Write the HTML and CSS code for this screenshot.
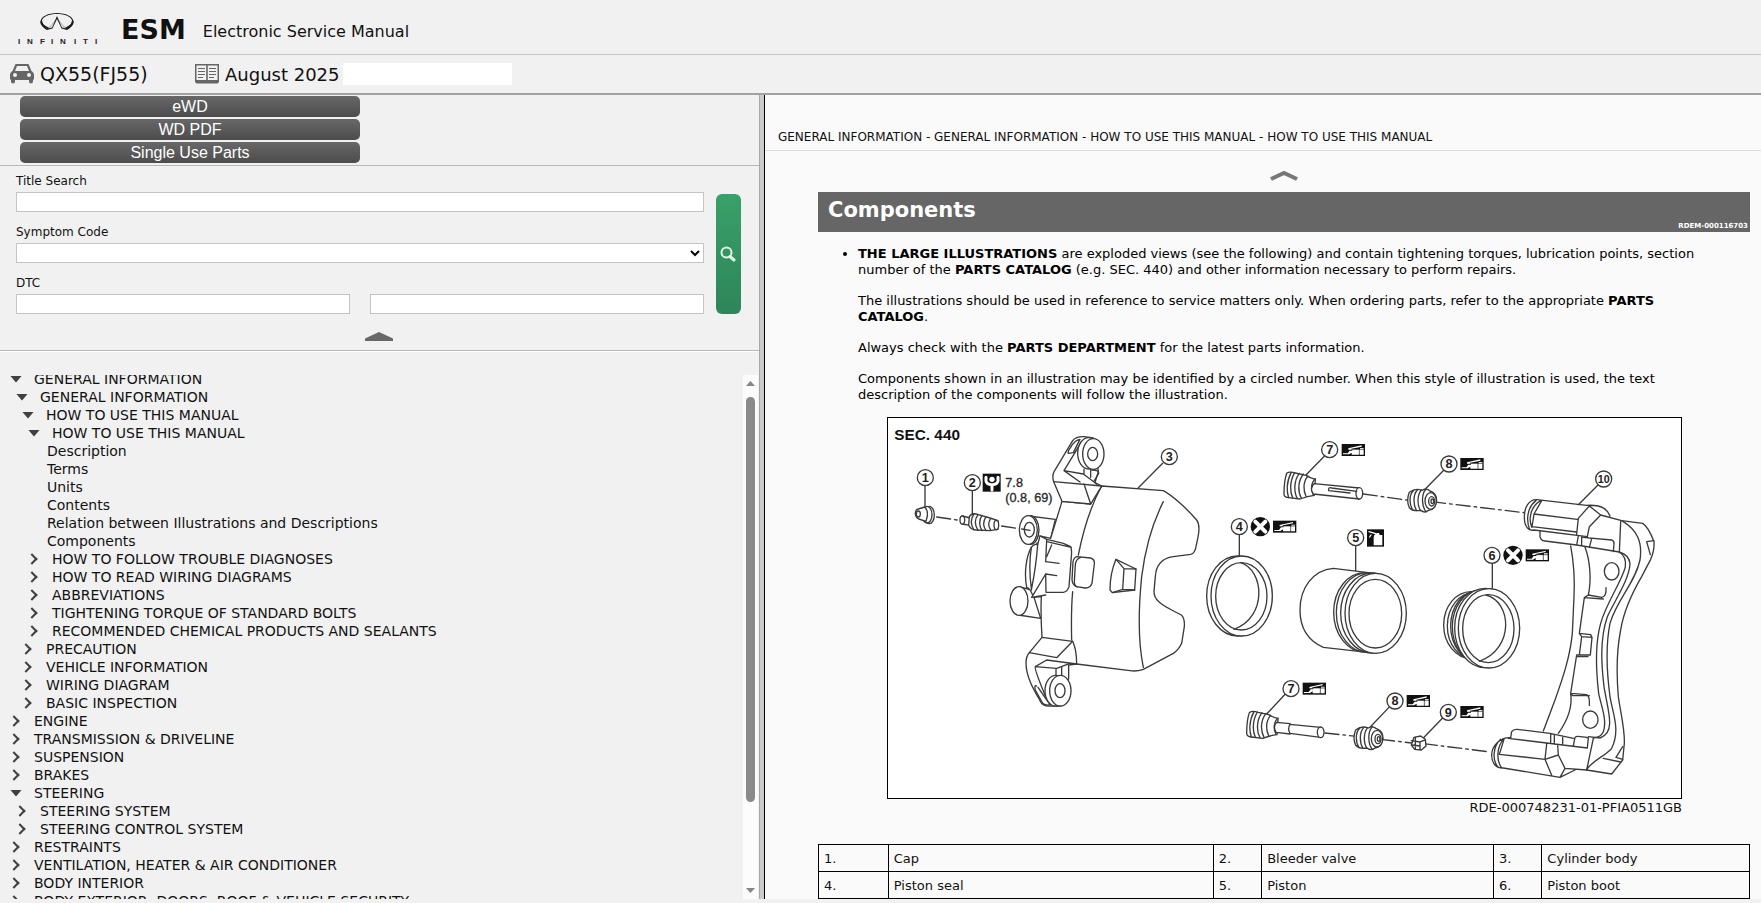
FILE: index.html
```
<!DOCTYPE html>
<html lang="en">
<head>
<meta charset="utf-8">
<title>ESM - Electronic Service Manual</title>
<link rel="stylesheet" href="styles.css">
</head>
<body>
<header class="brand">
  <svg class="logo" viewBox="0 0 80 32" role="img" aria-label="Infiniti">
    <path fill="#1b1b1b" fill-rule="evenodd" d="M29 17C24 14 22 11 22.500 8.500C23 3.500 30 0 39 0S55 3.500 55.500 8.500C56 11 54 14 49 17L43.500 15.500L39 6L34.500 15.500ZM29 15.500L31 14.300C35 11 37.500 7 39 3C40.500 7 43 11 47 14.300L49 15.500C52 12.500 54.500 10 54 7.500C53 3.500 47 1 39 1S25 3.500 24 7.500C23.500 10 26 12.500 29 15.500ZM29.500 15.500L34 14.500L38 6C36 10 33 13.500 29.500 15.500ZM48.500 15.500L44 14.500L40 6C42 10 45 13.500 48.500 15.500Z"/>
    <path fill="none" stroke="#1b1b1b" stroke-width="1.800" d="M30.500 15.500C25 13 23 10 23.500 8M47.500 15.500C53 13 55 10 54.500 8"/>
    <g class="logo-word"><text x="0" y="31">I</text><text x="9" y="31">N</text><text x="22" y="31">F</text><text x="33" y="31">I</text><text x="42" y="31">N</text><text x="56" y="31">I</text><text x="65" y="31">T</text><text x="77" y="31">I</text></g>
  </svg>
  <h1 class="brand-name">ESM</h1>
  <span class="brand-sub">Electronic Service Manual</span>
</header>
<div class="vehicle">
  <svg class="ico" viewBox="0 0 24 20" aria-hidden="true"><path fill="#666" fill-rule="evenodd" d="M5.500 0h13l3 7c1.500 1 2.500 2 2.500 4v4l-1 1v1.500a2 2 0 0 1-4 0V16H5v1.500a2 2 0 0 1-4 0V16l-1-1v-4c0-2 1-3 2.500-4zM7 2L5 7h14l-2-5z"/><circle cx="5" cy="11" r="2" fill="#f1f1f1"/><circle cx="19" cy="11" r="2" fill="#f1f1f1"/></svg>
  <span class="model">QX55(FJ55)</span>
  <svg class="ico" viewBox="0 0 24 20" aria-hidden="true"><path fill="#666" d="M0 0h24v18l-1.500 1.500h-21L0 18z"/><path fill="#f1f1f1" d="M1.500 1.500h9.700V16H1.500zM12.800 1.500h9.700V16h-9.700z"/><path stroke="#666" d="M3 4.500h7M3 7.500h7M3 10.500h7M3 13.500h5M14 4.500h7M14 7.500h7M14 10.500h7M14 13.500h5"/></svg>
  <span class="edition">August 2025</span>
  <span class="blank"></span>
</div>
<main class="panes">
  <aside class="side">
    <div class="actions">
      <button class="act" type="button">eWD</button>
      <button class="act" type="button">WD PDF</button>
      <button class="act" type="button">Single Use Parts</button>
    </div>
    <form class="search">
      <div class="fields">
        <label for="title">Title Search</label>
        <input id="title" type="text">
        <label for="symptom">Symptom Code</label>
        <select id="symptom"><option></option></select>
        <label for="dtc">DTC</label>
        <div class="pair"><input id="dtc" type="text"><input type="text" aria-label="DTC second code"></div>
      </div>
      <button class="go" type="button" aria-label="Search"><svg viewBox="0 0 16 16" width="16" height="16"><circle cx="6.500" cy="6.500" r="5" fill="none" stroke="#e4f4ea" stroke-width="2"/><path d="M10 10.500l4 3.500" stroke="#e4f4ea" stroke-width="3" stroke-linecap="round"/></svg></button>
      <button class="fold" type="button" aria-label="Collapse search"><svg viewBox="0 0 28 9" width="28" height="9"><path fill="#686868" d="M0 6.500L14 0l14 6.500V9H0z"/></svg></button>
    </form>
    <div class="nav">
      <ul class="tree">
        <li class="open l0">GENERAL INFORMATION</li>
        <li class="open l1">GENERAL INFORMATION</li>
        <li class="open l2">HOW TO USE THIS MANUAL</li>
        <li class="open l3">HOW TO USE THIS MANUAL</li>
        <li class="leaf">Description</li>
        <li class="leaf">Terms</li>
        <li class="leaf">Units</li>
        <li class="leaf">Contents</li>
        <li class="leaf">Relation between Illustrations and Descriptions</li>
        <li class="leaf">Components</li>
        <li class="shut l3">HOW TO FOLLOW TROUBLE DIAGNOSES</li>
        <li class="shut l3">HOW TO READ WIRING DIAGRAMS</li>
        <li class="shut l3">ABBREVIATIONS</li>
        <li class="shut l3">TIGHTENING TORQUE OF STANDARD BOLTS</li>
        <li class="shut l3">RECOMMENDED CHEMICAL PRODUCTS AND SEALANTS</li>
        <li class="shut l2">PRECAUTION</li>
        <li class="shut l2">VEHICLE INFORMATION</li>
        <li class="shut l2">WIRING DIAGRAM</li>
        <li class="shut l2">BASIC INSPECTION</li>
        <li class="shut l0">ENGINE</li>
        <li class="shut l0">TRANSMISSION &amp; DRIVELINE</li>
        <li class="shut l0">SUSPENSION</li>
        <li class="shut l0">BRAKES</li>
        <li class="open l0">STEERING</li>
        <li class="shut l1">STEERING SYSTEM</li>
        <li class="shut l1">STEERING CONTROL SYSTEM</li>
        <li class="shut l0">RESTRAINTS</li>
        <li class="shut l0">VENTILATION, HEATER &amp; AIR CONDITIONER</li>
        <li class="shut l0">BODY INTERIOR</li>
        <li class="shut l0">BODY EXTERIOR, DOORS, ROOF &amp; VEHICLE SECURITY</li>
      </ul>
      <div class="bar" aria-hidden="true"><span class="up"></span><div class="rail"><span class="thumb"></span></div><span class="down"></span></div>
    </div>
  </aside>
  <div class="split"></div>
  <article class="doc">
    <nav class="crumbs">GENERAL INFORMATION - GENERAL INFORMATION - HOW TO USE THIS MANUAL - HOW TO USE THIS MANUAL</nav>
    <button class="lift" type="button" aria-label="Previous section"><svg viewBox="0 0 28 10" width="28" height="10"><path fill="none" stroke="#777" stroke-width="4" d="M1 8L14 2l13 6"/></svg></button>
    <div class="page">
      <div class="title"><h2>Components</h2><span class="ref">RDEM-000116703</span></div>
      <ul class="body">
        <li>
          <p><b>THE LARGE ILLUSTRATIONS</b> are exploded views (see the following) and contain tightening torques, lubrication points, section number of the <b>PARTS CATALOG</b> (e.g. SEC. 440) and other information necessary to perform repairs.</p>
          <p>The illustrations should be used in reference to service matters only. When ordering parts, refer to the appropriate <b>PARTS CATALOG</b>.</p>
          <p>Always check with the <b>PARTS DEPARTMENT</b> for the latest parts information.</p>
          <p>Components shown in an illustration may be identified by a circled number. When this style of illustration is used, the text description of the components will follow the illustration.</p>
        </li>
      </ul>
      <figure class="fig">
<svg class="drawing" viewBox="888 418 793 380" role="img" aria-label="Exploded view of brake caliper">
  <defs>
    <g id="grease"><path fill="#111" stroke="none" d="M0 0h70v36H0z"/><path fill="#fff" stroke="none" d="M20 13L60 4v4L30 14v2h25v-4h11v20H30v-6l-8 5H4v-3h14l6-8h8v-3H20z"/><path fill="none" stroke="#111" stroke-width="2" d="M30 16h36M53 16v17"/></g>
    <g id="noreuse"><circle r="29" fill="#111" stroke="none"/><path stroke="#fff" stroke-width="12" d="M-15-15L15 15M15-15L-15 15"/></g>
    <g id="boot"><path d="M38-37Q20-43 12-36Q4-12 4 26Q4 36 18 37L52 41Q75 32 95 30L98-18Q80-23 70-30Z"/><path fill="none" d="M26-39C10-10 12 20 18 37M36-38C20-10 22 20 30 38M50-36C32-12 34 22 44 39M62-34C44-10 46 20 56 38M76-28C60-10 62 16 70 33M98-20C84-8 84 16 92 28"/></g>
    <g id="bush"><path d="M-38-24Q-20-38 0-30Q14-38 24-28Q44-22 44 2Q40 28 20 30Q8 40-4 30Q-26 34-38 22Q-48 0-38-24Z"/><path fill="none" d="M-26-29C-40-16-38 14-28 29M-14-31C-28-16-26 16-16 31M-2-31C-16-14-14 18-4 31M12-34C-4-16 0 20 12 34"/><ellipse cx="26" cy="2" rx="17" ry="25"/><ellipse cx="29" cy="3" rx="9" ry="14"/><ellipse cx="31" cy="3" rx="4" ry="7"/></g>
  </defs>
  <g class="ink" transform="translate(880 410) scale(.33333)">
    <path class="fine" d="M135 227V295M277 242V312M848 160L775 233"/>
    <path class="axis" d="M170 321L245 332M365 348L450 361"/>
    <ellipse cx="148" cy="315" rx="15" ry="26"/><ellipse cx="141" cy="314" rx="15" ry="25"/><path d="M115 297L134 291Q144 300 142 318L138 334L116 327Q106 322 106 310Q107 298 115 297Z"/><ellipse cx="115" cy="312" rx="6" ry="9"/>
    <path d="M247 318L270 324V346L247 342Z"/><ellipse cx="247" cy="330" rx="7" ry="12"/><path d="M268 320Q276 306 295 314L330 324L354 332V358L330 362L290 360Q272 360 266 346Z"/><path fill="none" d="M282 312Q266 334 282 360M294 314Q278 336 294 361M306 316Q292 338 306 362M318 320Q304 342 318 362M332 326Q320 344 332 360"/><ellipse cx="349" cy="345" rx="7" ry="14"/>
    <path d="M446 318L526 328L512 385L470 400"/><ellipse cx="451" cy="360" rx="26" ry="43"/><ellipse cx="445" cy="360" rx="27" ry="43"/><ellipse cx="448" cy="359" rx="15" ry="22"/><path class="fine" d="M425 357L450 361"/>
    <path d="M417 530L455 540L482 625L415 615Z"/><ellipse cx="417" cy="573" rx="27" ry="43"/>
    <path d="M440 532C432 490 438 440 454 412Q462 400 473 404L480 378L512 385L546 274L632 282L665 228L850 242C880 258 926 302 950 330C962 346 956 375 949 405Q946 430 932 433L880 440C845 445 828 465 826 500L822 545C822 570 845 585 875 600L904 615Q915 625 913 650L905 700Q896 720 880 730L790 778Q770 785 750 782L590 762L486 682C484 650 482 600 484 560L460 562Q452 535 440 532Z"/>
    <path fill="none" d="M665 228Q620 310 595 435M850 275C812 350 795 420 785 500C775 600 775 700 790 772M578 545C573 600 574 650 575 690M454 412Q445 470 454 535M473 404C470 450 462 500 454 540"/>
    <path d="M480 378L500 388L550 400L572 410Q576 420 574 440L567 530Q562 546 550 547L498 547L497 492L530 497M497 555L455 562L497 492M500 395L574 412M500 390L497 455L537 460M515 405L500 440"/>
    <path d="M590 440L632 444Q645 448 643 462L636 520Q631 535 615 534L590 530Q578 526 576 510L579 455Q582 442 590 440Z"/><path fill="none" d="M602 442Q588 446 586 464L583 515Q583 527 592 531"/>
    <path d="M708 448L768 477L764 540L697 548L690 540Q690 490 708 448Z"/><path fill="none" d="M708 448L732 476L768 477M732 476L728 538L697 548M728 538L764 540"/>
    <path d="M521 215C517 205 518 190 524 182L578 92Q588 79 612 80L640 84L655 185L645 218L665 228L632 282L546 274Z"/>
    <path fill="none" d="M521 215L665 228M612 222L632 282M565 130Q562 124 572 112Q584 90 600 88L580 128ZM605 95L552 182L610 192L650 222M552 182L600 216M612 178V192M632 178V202M636 180Q658 180 656 190L643 212"/>
    <ellipse cx="626" cy="130" rx="33" ry="47"/><ellipse cx="640" cy="132" rx="32" ry="46"/><ellipse cx="638" cy="132" rx="15" ry="20"/>
    <path d="M486 682L578 694Q590 720 590 762L566 765V805L540 888H510Q488 890 480 872C462 840 438 800 438 760Q438 738 448 728Z"/>
    <path fill="none" d="M448 728L530 743L578 694M590 762L500 750L466 770Q462 776 495 855M466 770L530 775L566 762M528 775V800M545 770V800M470 828Q462 824 466 840L488 880Q500 888 510 884L474 832"/>
    <ellipse cx="527" cy="842" rx="32" ry="46"/><ellipse cx="541" cy="842" rx="32" ry="46"/><ellipse cx="540" cy="842" rx="15" ry="21"/>
    <path fill="#111" stroke="none" d="M308 191h54v54h-54z"/><circle cx="336" cy="208" r="8" fill="#fff" stroke="none"/><path fill="none" stroke="#fff" stroke-width="9" d="M318 202V213Q320 224 336 224Q352 224 354 213V202M336 224V240"/>
    <circle cx="136" cy="203" r="24"/><circle cx="277" cy="218" r="24"/><circle cx="868" cy="140" r="24"/>
    <g class="num"><text x="136" y="216">1</text><text x="277" y="231">2</text><text x="868" y="153">3</text></g>
    <text class="torque" x="376" y="232">7.8</text><text class="torque" x="376" y="277">(0.8, 69)</text>
    <text class="sec" x="43" y="89">SEC. 440</text>
  </g>
  <g class="ink" transform="translate(1190 410) scale(.33333)">
    <path class="fine" d="M403 139L345 198M762 180L700 243M148 375V438M497 407V484M907 460V535M286 852L230 912M599 890L540 952M760 922L700 984"/>
    <path class="axis" d="M520 252L650 270M725 275L1003 308M405 969L500 979M572 988L665 999M700 1001L900 1026"/>
    <use href="#boot" x="278" y="226"/><path d="M372 221L508 234V267L370 252Q358 235 372 221Z"/><ellipse cx="508" cy="250" rx="10" ry="17"/><path fill="none" d="M500 244L425 234Q414 230 416 242L480 249"/>
    <use href="#bush" x="696" y="271"/>
    <use href="#boot" x="166" y="944"/><path d="M260 937L300 941V972L258 967Q248 950 260 937Z"/><path d="M300 943L392 952V982L300 970Q292 956 300 943Z"/><ellipse cx="392" cy="967" rx="10" ry="16"/>
    <use href="#bush" x="535" y="984"/>
    <path d="M672 982L692 978L706 988L708 1008L694 1020L674 1018L664 1005Z"/><path fill="none" d="M664 992L690 996L706 990M690 996V1018M676 982V1018M666 1005L690 1008"/>
    <ellipse cx="143" cy="558" rx="93" ry="120"/><ellipse cx="155" cy="558" rx="92" ry="120"/><ellipse cx="154" cy="559" rx="77" ry="101"/><path fill="none" d="M152 458C222 480 234 620 132 658"/>
    <path d="M430 475L560 491V730L400 712C350 690 330 650 330 600C330 535 368 480 430 475Z"/>
    <ellipse cx="524" cy="607" rx="93" ry="119"/><ellipse cx="533" cy="608" rx="94" ry="120"/><ellipse cx="546" cy="609" rx="94" ry="120"/><ellipse cx="557" cy="610" rx="92" ry="120"/><ellipse cx="556" cy="611" rx="79" ry="103"/>
    <ellipse cx="843" cy="645" rx="82" ry="100"/><ellipse cx="852" cy="648" rx="80" ry="100"/><ellipse cx="862" cy="648" rx="80" ry="105"/><ellipse cx="872" cy="650" rx="85" ry="110"/><ellipse cx="886" cy="654" rx="92" ry="119"/><ellipse cx="897" cy="655" rx="92" ry="119"/><ellipse cx="895" cy="656" rx="77" ry="102"/><path fill="none" d="M888 555C965 575 975 715 868 754"/>
    <use href="#grease" x="455" y="102"/><use href="#grease" x="811" y="144"/><use href="#grease" x="249" y="332"/><use href="#grease" x="1007" y="418"/><use href="#grease" x="338" y="818"/><use href="#grease" x="650" y="855"/><use href="#grease" x="811" y="888"/>
    <use href="#noreuse" x="211" y="350"/><use href="#noreuse" x="969" y="436"/>
    <path fill="#111" stroke="none" d="M531 358h51v52h-51z"/><path fill="#fff" stroke="none" d="M553 375l8-6h6l2 6h8v31h-26v-24z"/><path stroke="#fff" fill="none" d="M537 365l20 6M539 381l4-6"/>
    <circle cx="419" cy="119" r="24"/><circle cx="777" cy="162" r="24"/><circle cx="148" cy="350" r="24"/><circle cx="497" cy="383" r="24"/><circle cx="906" cy="436" r="24"/><circle cx="303" cy="836" r="24"/><circle cx="615" cy="873" r="24"/><circle cx="775" cy="907" r="24"/>
    <g class="num"><text x="419" y="132">7</text><text x="777" y="175">8</text><text x="148" y="363">4</text><text x="497" y="396">5</text><text x="906" y="449">6</text><text x="303" y="849">7</text><text x="615" y="886">8</text><text x="775" y="920">9</text></g>
  </g>
  <g class="ink" transform="translate(1430 410) scale(.33333)">
    <path class="fine" d="M504 225L445 284"/>
    <g fill="none">
    <path d="M470 286L320 269C295 268 283 295 283 320C283 350 295 364 312 360L472 380M332 272C300 290 295 330 306 352M318 272C290 292 288 335 300 360M335 272L312 312L306 350L440 366M312 312L442 328M470 286Q505 284 522 295Q535 303 540 318M478 288L445 325L440 372M478 288L512 315L478 350L472 380M512 315L575 332L638 340Q655 350 672 395Q674 420 662 448L635 500C600 560 580 610 572 660C558 730 560 800 565 860C572 910 585 960 583 1000L578 1050L545 1092L470 1080M672 392L650 395L661 434"/>
    <path d="M575 332C622 360 638 395 630 450C615 520 560 570 540 640C524 720 532 800 540 860C548 910 572 960 545 1015C530 1035 490 1050 470 1078M572 335L568 428"/>
    <path d="M330 364V380Q332 392 345 393L440 405L568 426Q598 435 600 462C597 510 555 570 532 620C508 690 515 770 522 830C528 870 540 910 539 940Q538 975 510 984L475 980M568 426Q590 440 586 470C578 510 528 580 512 640C495 700 499 790 506 850C514 890 532 930 520 965Q512 982 490 984M445 378L440 405M455 380V408M470 382L485 386L478 412M458 382L545 390Q553 393 552 402L550 425"/>
    <path d="M422 408C430 450 435 500 432 560L427 670C420 740 400 800 375 870L340 963M465 412C480 450 485 510 475 555L463 563L448 670M475 555L515 562Q530 560 528 533M463 563L520 567M448 670L482 674L486 682L481 735L440 735L422 850C428 890 410 935 385 970M448 670L455 680L486 682M455 680L448 735M440 740H474M422 850L428 857H478M422 850L470 854Q480 860 478 886"/>
    <ellipse cx="545" cy="484" rx="22" ry="26"/><ellipse cx="481" cy="929" rx="23" ry="26"/>
    <path d="M242 982L245 965Q250 957 262 958L360 970L430 985M362 972V998M373 974V999M398 978V1002M430 1008L435 982Q440 976 475 984L472 1014L235 985M243 983C210 980 185 1010 185 1035C185 1062 200 1075 220 1074L390 1102L435 1080M222 986C200 1010 198 1050 215 1074M212 988C188 1010 186 1052 205 1072M222 988L208 1033L345 1048L385 1035L383 1005M350 1002L345 1048L365 1096M385 1035L405 1075L390 1102M405 1075L470 1080L490 985M578 1010L558 1042L578 1048M520 1045L572 1056"/>
    </g>
    <circle cx="521" cy="207" r="24"/><g class="num"><text x="521" y="218" class="ten">10</text></g>
  </g>
</svg>
        <figcaption>RDE-000748231-01-PFIA0511GB</figcaption>
      </figure>
      <table class="parts">
        <colgroup><col class="c1"><col class="c2"><col class="c3"><col class="c4"><col class="c3"><col class="c6"></colgroup>
        <tbody>
          <tr><td>1.</td><td>Cap</td><td>2.</td><td>Bleeder valve</td><td>3.</td><td>Cylinder body</td></tr>
          <tr><td>4.</td><td>Piston seal</td><td>5.</td><td>Piston</td><td>6.</td><td>Piston boot</td></tr>
        </tbody>
      </table>
    </div>
  </article>
</main>
</body>
</html>
```
FILE: styles.css
```
*, *::before { box-sizing: border-box; }
body {
  margin: 0;
  height: 100vh;
  padding-bottom: 4px;
  display: flex;
  flex-direction: column;
  overflow: hidden;
  background: #f1f1f1;
  color: #111;
  font-family: Verdana, "DejaVu Sans", sans-serif;
  font-size: 13px;
}
button { border: 0; padding: 0; background: none; font: inherit; }
ul, p, h1, h2, figure { margin: 0; padding: 0; }

.brand {
  flex: none;
  display: flex;
  align-items: center;
  height: 55px;
  padding: 4px 18px 0;
  border-bottom: 1px solid #c4c4c4;
}
.logo { width: 80px; height: 32px; }
.logo-word { font: bold 8px "Liberation Sans", sans-serif; fill: #222; }
.brand-name { margin-left: 23px; font-size: 27px; }
.brand-sub { margin: 4px 0 0 17px; font-size: 16px; }

.vehicle {
  flex: none;
  display: flex;
  align-items: center;
  height: 40px;
  padding: 0 10px;
  border-bottom: 2px solid #a2a2a2;
  font-size: 18px;
}
.ico { width: 24px; height: 20px; margin-right: 6px; }
.model { width: 155px; font-size: 19px; }
.blank { width: 169px; height: 22px; margin-left: 3px; background: #fff; }

.panes { flex: 1; min-height: 0; display: flex; }
.side { width: 43.1%; flex: none; display: flex; flex-direction: column; }
.actions {
  display: flex;
  flex-direction: column;
  gap: 2px;
  padding: 1px 20px 2px;
  border-bottom: 1px solid #b8b8b8;
}
.act {
  width: 340px;
  height: 21px;
  border-radius: 5px;
  background: linear-gradient(#686868, #4c4c4c);
  color: #fff;
  font: 16px/21px "Liberation Sans", sans-serif;
}
.search {
  display: grid;
  grid-template-columns: 1fr 25px;
  column-gap: 12px;
  padding: 4px 18px 9px 16px;
  border-bottom: 1px solid #b8b8b8;
  box-shadow: 0 1px #fff;
  font-size: 12px;
}
.fields { display: flex; flex-direction: column; }
.fields label { height: 22px; line-height: 22px; }
.fields input, .fields select {
  width: 100%;
  height: 20px;
  border: 1px solid #c4c4c4;
  border-radius: 0;
  background: #fff;
}
.fields > input, .fields > select { margin-bottom: 9px; }
.pair { display: flex; gap: 20px; }
.go {
  align-self: end;
  display: grid;
  place-items: center;
  height: 120px;
  border-radius: 6px;
  background: linear-gradient(#38a169, #2e8559);
}
.fold { grid-column: 1 / -1; justify-self: center; height: 9px; margin: 18px 0 0 2px; display: flex; }

.nav { flex: 1; min-height: 0; display: flex; margin-top: 24px; }
.tree { flex: 1; overflow: hidden; list-style: none; font-size: 14px; line-height: 18px; }
.tree li { display: flex; align-items: center; height: 18px; white-space: nowrap; }
.tree li:first-child { margin-top: -5px; }
.open::before {
  content: "";
  width: 12px;
  height: 7px;
  margin-right: 12px;
  background: #404040;
  clip-path: polygon(0 0, 100% 0, 50% 100%);
}
.shut::before {
  content: "";
  width: 8px;
  height: 8px;
  margin-right: 16px;
  border: solid #404040;
  border-width: 2px 2px 0 0;
  transform: rotate(45deg);
}
.l0 { padding-left: 10px; }
.l1 { padding-left: 16px; }
.l2 { padding-left: 22px; }
.l3 { padding-left: 28px; }
.leaf { padding-left: 47px; }

.bar { width: 15px; margin-right: 1px; display: flex; flex-direction: column; align-items: center; padding: 6px 0; background: #fcfcfc; }
.up, .down { width: 9px; height: 5px; background: #858585; clip-path: polygon(50% 0, 100% 100%, 0 100%); }
.down { clip-path: polygon(0 0, 100% 0, 50% 100%); }
.rail { flex: 1; padding: 10px 0; }
.thumb { display: block; width: 9px; height: 84%; margin-top: 1px; border-radius: 5px; background: #8a8a8a; }

.split { width: 6px; flex: none; background: #ccc; border-left: 1px solid #a8a8a8; border-right: 1px solid #000; }

.doc { flex: 1; min-width: 0; overflow: hidden; display: flex; flex-direction: column; background: #fafafa; }
.crumbs { flex: none; height: 56px; padding: 32px 13px 0; border-bottom: 1px solid #ddd; font-size: 12px; line-height: 20px; }
.lift { align-self: center; flex: none; display: flex; margin: 20px 0 11px 42px; }
.page { padding: 0 11px 0 53px; }
.title { display: flex; justify-content: space-between; height: 40px; padding: 0 2px 0 10px; background: #666; color: #fff; }
.title h2 { font-size: 21px; line-height: 37px; }
.ref { align-self: flex-end; font-size: 7px; font-weight: bold; line-height: 11px; }
.body { padding: 14px 30px 0 40px; line-height: 16px; color: #000; }
.body p + p { margin-top: 15px; }
.fig { width: 795px; max-width: 100%; margin: 14px 68px 0 auto; }
.drawing { display: block; width: 100%; border: 1px solid #000; background: #fff; }
.fig figcaption { text-align: right; line-height: 18px; }
.ink { fill: #fff; stroke: #3a3a3a; stroke-width: 4; stroke-linejoin: round; stroke-linecap: round; font-family: "Liberation Sans", sans-serif; }
.ink .axis { stroke-dasharray: 42 12 8 12; }
.ink text { stroke: none; fill: #222; }
.num { font-size: 38px; font-weight: bold; text-anchor: middle; }
.num .ten { font-family: "Liberation Sans Narrow", "Liberation Sans", sans-serif; font-size: 32px; }
.torque { font-size: 38px; }
.ink .torque { stroke: #333; stroke-width: 1; }
.ink .sec { font-size: 46px; font-weight: bold; fill: #111; }

.parts { width: 100%; margin-top: 27px; border-collapse: collapse; table-layout: fixed; }
.parts td { height: 27px; padding: 0 5px; border: 1px solid #000; }
.c1 { width: 7.5%; }
.c2 { width: 34.9%; }
.c3 { width: 5.2%; }
.c4 { width: 24.9%; }
.c6 { width: 22.3%; }
```
